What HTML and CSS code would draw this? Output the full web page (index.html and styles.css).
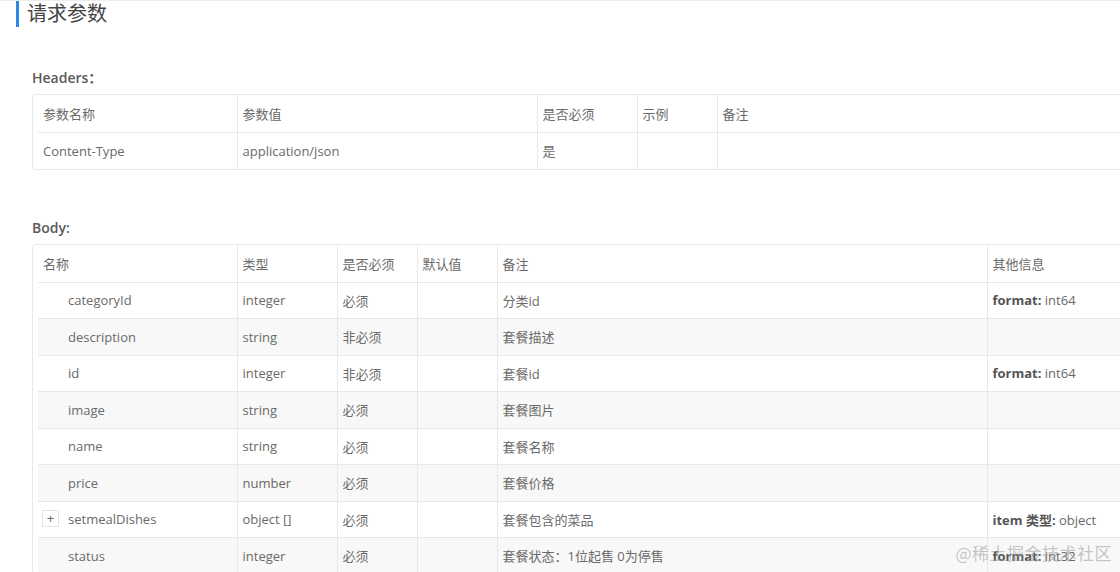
FILE: index.html
```html
<!DOCTYPE html>
<html lang="zh">
<head>
<meta charset="utf-8">
<link rel="stylesheet" href="styles.css">
</head>
<body>
<div class="page">
  <h2 class="title">请求参数</h2>

  <div class="section section-headers">
    <div class="label">Headers：</div>
    <div class="box">
      <table class="tbl">
        <colgroup><col style="width:199px"><col style="width:300px"><col style="width:100px"><col style="width:80px"><col></colgroup>
        <tr><td>参数名称</td><td>参数值</td><td>是否必须</td><td>示例</td><td>备注</td></tr>
        <tr><td>Content-Type</td><td>application/json</td><td>是</td><td></td><td></td></tr>
      </table>
    </div>
  </div>

  <div class="section section-body">
    <div class="label">Body:</div>
    <div class="box">
      <table class="tbl">
        <colgroup><col style="width:199px"><col style="width:100px"><col style="width:80px"><col style="width:80px"><col style="width:490px"><col></colgroup>
        <tr><td>名称</td><td>类型</td><td>是否必须</td><td>默认值</td><td>备注</td><td>其他信息</td></tr>
        <tr><td class="name">categoryId</td><td>integer</td><td>必须</td><td></td><td>分类id</td><td><b>format:</b> int64</td></tr>
        <tr class="alt"><td class="name">description</td><td>string</td><td>非必须</td><td></td><td>套餐描述</td><td></td></tr>
        <tr><td class="name">id</td><td>integer</td><td>非必须</td><td></td><td>套餐id</td><td><b>format:</b> int64</td></tr>
        <tr class="alt"><td class="name">image</td><td>string</td><td>必须</td><td></td><td>套餐图片</td><td></td></tr>
        <tr><td class="name">name</td><td>string</td><td>必须</td><td></td><td>套餐名称</td><td></td></tr>
        <tr class="alt"><td class="name">price</td><td>number</td><td>必须</td><td></td><td>套餐价格</td><td></td></tr>
        <tr><td class="name has-toggle"><span class="toggle">+</span>setmealDishes</td><td>object []</td><td>必须</td><td></td><td>套餐包含的菜品</td><td><b>item 类型:</b> object</td></tr>
        <tr class="alt"><td class="name">status</td><td>integer</td><td>必须</td><td></td><td>套餐状态：1位起售 0为停售</td><td><b>format:</b> int32</td></tr>
      </table>
    </div>
  </div>
</div>
<div class="watermark">@稀土掘金技术社区</div>
</body>
</html>
```

FILE: styles.css
```css
html, body {
  margin: 0;
  padding: 0;
  background: #fff;
  overflow: hidden;
}
body {
  width: 1120px;
  height: 572px;
  font-family: "Open Sans", "Noto Sans CJK SC", sans-serif;
  color: #666;
  border-top: 1px solid #eeeeee;
  box-sizing: border-box;
  position: relative;
}
.page {
  padding-left: 16px;
}
.title {
  margin: 0;
  height: 26px;
  border-left: 3px solid #2f8ae6;
  padding-left: 8px;
  font-size: 20px;
  font-weight: 400;
  line-height: 24px;
  color: #444;
  font-family: "Noto Sans CJK SC", sans-serif;
}
.section {
  margin-left: 16px;
}
.section-headers {
  margin-top: 42px;
}
.section-body {
  margin-top: 49px;
}
.label {
  font-size: 14px;
  font-weight: 600;
  color: #5a5a5a;
  line-height: 18px;
  height: 18px;
  margin-bottom: 7px;
  font-family: "Open Sans", "Noto Sans CJK SC", sans-serif;
}
.box {
  border: 1px solid #e8e8e8;
  border-radius: 4px;
  padding-left: 5px;
  width: 1300px;
}
.tbl {
  border-collapse: collapse;
  table-layout: fixed;
  width: 100%;
  font-size: 13px;
}
.tbl td {
  height: 36px;
  padding: 0 5px;
  border-right: 1px solid #e8e8e8;
  border-bottom: 1px solid #e8e8e8;
  white-space: nowrap;
  color: #6a6a6a;
  box-sizing: border-box;
}
.section-headers .tbl td {
  height: 37px;
}
.tbl tr:last-child td {
  border-bottom: none;
}
.section-body .tbl tr:nth-child(odd) td {
  height: 37px;
}
.tbl td:last-child {
  border-right: none;
}
.tbl tr.alt td {
  background: #f8f8f8;
}
.tbl td.name {
  padding-left: 30px;
}
.tbl td b {
  font-weight: 700;
  color: #555;
}
.has-toggle {
  position: relative;
}
.toggle {
  position: absolute;
  left: 4px;
  top: 50%;
  margin-top: -9px;
  width: 15px;
  height: 15px;
  border: 1px solid #e4e4e4;
  background: #fff;
  font-size: 13px;
  line-height: 14px;
  text-align: center;
  color: #666;
}
.watermark {
  position: absolute;
  right: 8px;
  bottom: 7px;
  font-size: 17px;
  color: rgba(150, 150, 150, 0.55);
  font-family: "Noto Sans CJK SC", sans-serif;
  letter-spacing: 0.5px;
}
```
